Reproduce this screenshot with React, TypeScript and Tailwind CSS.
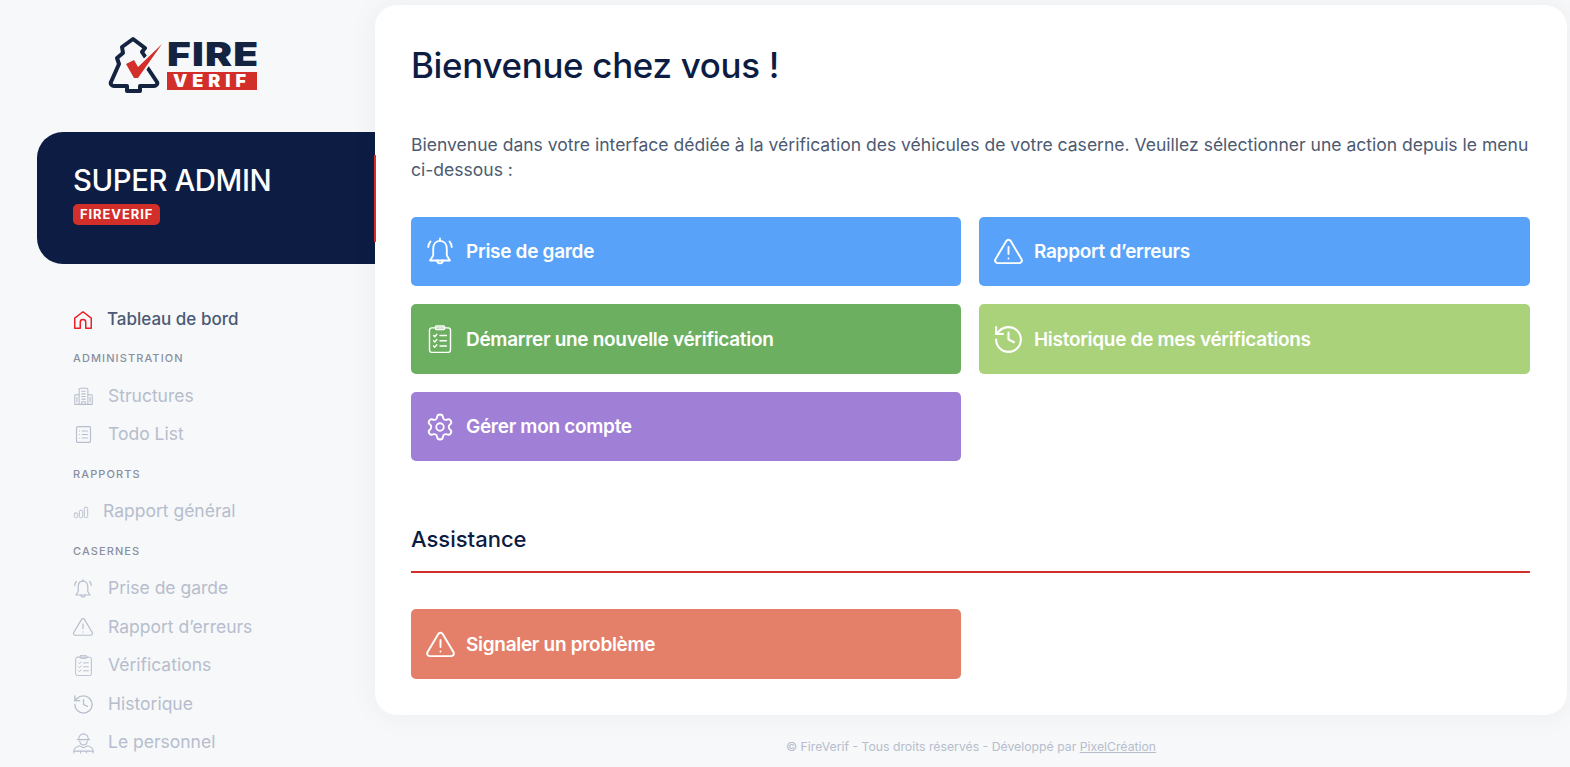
import { Settings, History } from 'lucide-react'

const font = { fontFamily: 'Inter, sans-serif' }

type IconProps = { className?: string; strokeWidth?: number }

function Svg({ className, strokeWidth = 1.5, children }: IconProps & { children: React.ReactNode }) {
    return (
        <svg viewBox="0 0 24 24" fill="none" stroke="currentColor" strokeWidth={strokeWidth} strokeLinecap="round" strokeLinejoin="round" className={`shrink-0 ${className ?? ''}`}>
            {children}
        </svg>
    )
}

function BellIcon(props: IconProps) {
    return (
        <Svg {...props}>
            <path d="M12 4.200C8.800 4.200 7.200 6.800 7.200 10v4.500L5 18h14l-2.200-3.500V10c0-3.200-1.600-5.800-4.800-5.800Z" />
            <path d="M12 4.200V2.500M10 18a2 2 0 0 0 4 0" />
            <path d="M5.300 4.500C4.400 5.600 3.800 6.800 3.700 8.500M18.700 4.500c.9 1.100 1.500 2.300 1.600 4" />
        </Svg>
    )
}

function WarnIcon(props: IconProps) {
    return (
        <Svg {...props}>
            <path d="M10.300 3.900 1.900 18a2 2 0 0 0 1.700 3h16.800a2 2 0 0 0 1.700-3L13.700 3.900a2 2 0 0 0-3.400 0Z" />
            <path d="M12 8.500v5.500M12 17.400h.01" />
        </Svg>
    )
}

function ChecklistIcon(props: IconProps) {
    return (
        <Svg {...props}>
            <rect x="3" y="2.500" width="18" height="21" rx="2" />
            <rect x="8" y="0.800" width="8" height="3" rx="1" />
            <path d="M6.500 9l1 1 1.800-2M6.500 13.500l1 1 1.800-2M6.500 18l1 1 1.800-2" />
            <path d="M12 9h5.500M12 13.500h5.500M12 18h5.500" />
        </Svg>
    )
}

function HomeIcon(props: IconProps) {
    return (
        <Svg {...props}>
            <path d="M3 10 12 3l9 7v11h-6v-6.500a3 3 0 0 0-6 0V21H3Z" />
        </Svg>
    )
}

function BuildingIcon(props: IconProps) {
    return (
        <Svg {...props}>
            <path d="M7 21V4a1.500 1.500 0 0 1 1.500-1.500h7A1.500 1.500 0 0 1 17 4v17" />
            <path d="M2 21V11a1 1 0 0 1 1-1h4M22 21V11a1 1 0 0 0-1-1h-4M2 21h20" />
            <path d="M10 6h4M10 9h4M10 12h4M10 15h4M10 21v-3h4v3M4.500 13v5M19.500 13v5" />
        </Svg>
    )
}

function ListDocIcon(props: IconProps) {
    return (
        <Svg {...props}>
            <rect x="4" y="3" width="16" height="18" rx="1.500" />
            <path d="M7.500 8h.01M7.500 12h.01M7.500 16h.01M10.500 8h6M10.500 12h6M10.500 16h6" />
        </Svg>
    )
}

function BarsIcon(props: IconProps) {
    return (
        <Svg {...props}>
            <rect x="2" y="13.500" width="5" height="7" rx="1.500" />
            <rect x="9.500" y="9.500" width="5" height="11" rx="1.500" />
            <rect x="17" y="5" width="5" height="15.500" rx="1.500" />
        </Svg>
    )
}

function FiremanIcon(props: IconProps) {
    return (
        <Svg {...props}>
            <path d="M7 8.500c0-3 2.200-5.500 5-5.500s5 2.500 5 5.500" />
            <path d="M5.500 9h13" />
            <path d="M8 10.500c.4 2.500 2 4 4 4s3.600-1.500 4-4" />
            <path d="M2 23v-2.500c0-2.500 2.500-4 6-5l4 2 4-2c3.500 1 6 2.500 6 5V23" />
            <path d="M2 21h20M9 21v2M15 21v2" />
        </Svg>
    )
}

function Logo() {
    return (
        <div className="flex items-start">
            <svg viewBox="0 0 56 58" className="w-[56px] h-[58px] shrink-0" fill="none">
                <path d="M25 3 37 12 34 16 40 25 37 28 49 46C50 48 48 50 46 50H32V55H19V50H6C4 50 2 48 3 46L11 28 9 22 15 17 14 11Z" stroke="#14233f" strokeWidth="4" strokeLinejoin="round" />
                <path d="M18 28 26 24 30 31 54 8 30 42 26 42Z" fill="#f6f8fa" stroke="#f6f8fa" strokeWidth="4" />
                <path d="M18 28 26 24 30 31 54 8 30 42 26 42Z" fill="#d32f2a" />
            </svg>
            <div className="flex flex-col w-[90px] ml-[3px] mt-[4px]">
                <div className="text-[#14233f] text-[33px] leading-[28px] h-[28px] font-black tracking-[1px] scale-x-[1.23] origin-left">FIRE</div>
                <div className="bg-[#d32f2a] text-white text-[18px] leading-[18px] h-[18px] font-black tracking-[5px] text-center mt-[4px]">VERIF</div>
            </div>
        </div>
    )
}

const sections = [
    {
        title: 'ADMINISTRATION',
        titleGap: 'mb-[19px]',
        items: [
            { label: 'Structures', icon: <BuildingIcon className="w-[21px] h-[21px]" strokeWidth={1.2} /> },
            { label: 'Todo List', icon: <ListDocIcon className="w-[21px] h-[21px]" strokeWidth={1.3} /> },
        ],
    },
    {
        title: 'RAPPORTS',
        titleGap: 'mb-[18px]',
        items: [{ label: 'Rapport général', icon: <BarsIcon className="w-4 h-4" strokeWidth={1.4} />, small: true }],
    },
    {
        title: 'CASERNES',
        titleGap: 'mb-[18px]',
        items: [
            { label: 'Prise de garde', icon: <BellIcon className="w-[24px] h-[24px]" strokeWidth={1.2} /> },
            { label: 'Rapport d’erreurs', icon: <WarnIcon className="w-[22px] h-[22px]" strokeWidth={1.3} /> },
            { label: 'Vérifications', icon: <ChecklistIcon className="w-[21px] h-[21px]" strokeWidth={1.1} /> },
            { label: 'Historique', icon: <History className="w-[23px] h-[23px] shrink-0" strokeWidth={1.4} /> },
            { label: 'Le personnel', icon: <FiremanIcon className="w-[23px] h-[23px]" strokeWidth={1.1} /> },
        ],
    },
]

function Sidebar() {
    return (
        <aside className="w-[375px] shrink-0 flex flex-col pl-[37px]">
            <div className="h-[132px] pl-[71px] pt-[36px]">
                <Logo />
            </div>
            <div className="h-[132px] bg-[#0c1c43] rounded-l-[26px] pl-[36px] pt-[30px]">
                <div className="text-white text-[29.300px] leading-[38px] font-medium tracking-[-0.4px]">SUPER ADMIN</div>
                <span className="inline-block mt-[4px] bg-[#d32f2a] text-white text-[13px] leading-[21px] h-[21px] px-[7px] rounded-[5px] font-bold tracking-[0.9px]">FIREVERIF</span>
            </div>
            <nav className="pl-[36px] pt-[43px]">
                <div className="flex items-center h-[26px] gap-[14px] text-[#4b5a75] text-[17px] font-medium -mb-[2px]">
                    <div className="w-[20px] flex justify-center">
                        <HomeIcon className="w-[22px] h-[22px] text-[#ee1c25]" strokeWidth={1.6} />
                    </div>
                    Tableau de bord
                </div>
                {sections.map(section => (
                    <div key={section.title}>
                        <div className={`h-[12px] mt-[21px] flex items-center text-[#8a90a0] text-[11px] font-medium tracking-[1.1px] ${section.titleGap}`}>{section.title}</div>
                        <div className="flex flex-col gap-[12.500px]">
                            {section.items.map(item => (
                                <div key={item.label} className={`flex items-center h-[26px] text-[#b7bdcc] text-[17.500px] ${'small' in item ? 'gap-[14px]' : 'gap-[15px]'}`}>
                                    {'small' in item ? item.icon : <div className="w-[20px] flex justify-center">{item.icon}</div>}
                                    {item.label}
                                </div>
                            ))}
                        </div>
                    </div>
                ))}
            </nav>
        </aside>
    )
}

function ActionButton({ label, color, icon }: { label: string; color: string; icon: React.ReactNode }) {
    return (
        <div className={`h-full rounded-[5px] flex items-center pl-[15px] gap-[12px] text-white text-[19px] font-semibold tracking-[-0.3px] ${color}`}>
            <div className="w-[28px] flex justify-center">{icon}</div>
            <span className="pt-[2px]">{label}</span>
        </div>
    )
}

export default function App() {
    return (
        <div className="w-[1570px] h-[767px] overflow-hidden flex bg-[#f6f8fa]" style={font}>
            <Sidebar />
            <div className="flex-1 pr-[3px] pt-[5px] flex flex-col relative">
                <div className="absolute -left-[1px] top-[155px] w-[2px] h-[87px] bg-[#d32f2a]" />
                <main className="bg-white rounded-[22px] h-[710px] pl-[36px] pr-[37px] pt-[36px] shadow-[0_0_30px_rgba(0,0,0,0.05)]">
                    <h1 className="text-[#0c1c43] text-[34.900px] leading-[48px] font-medium tracking-[-0.3px]">Bienvenue chez vous !</h1>
                    <p className="mt-[43px] text-[#4d5a72] text-[17.550px] leading-[25px]">
                        Bienvenue dans votre interface dédiée à la vérification des véhicules de votre caserne. Veuillez sélectionner une action depuis le menu ci-dessous :
                    </p>
                    <div className="grid grid-cols-[550px_551px] grid-rows-[69px_70px_69px] gap-[18px] mt-[35px]">
                        <ActionButton label="Prise de garde" color="bg-[#58a3f9]" icon={<BellIcon className="w-[34px] h-[34px]" strokeWidth={1.3} />} />
                        <ActionButton label="Rapport d’erreurs" color="bg-[#58a3f9]" icon={<WarnIcon className="w-[31px] h-[31px]" />} />
                        <ActionButton label="Démarrer une nouvelle vérification" color="bg-[#6daf60]" icon={<ChecklistIcon className="w-[28px] h-[28px]" strokeWidth={1.2} />} />
                        <ActionButton label="Historique de mes vérifications" color="bg-[#a9d27a]" icon={<History className="w-[33px] h-[33px] shrink-0" strokeWidth={1.5} />} />
                        <ActionButton label="Gérer mon compte" color="bg-[#a07fd6]" icon={<Settings className="w-[30px] h-[30px] shrink-0" strokeWidth={1.5} />} />
                    </div>
                    <h2 className="mt-[63px] text-[#0c1c43] text-[22px] leading-[30px] font-medium">Assistance</h2>
                    <div className="h-[2px] bg-[#d32f2a] mt-[17px]" />
                    <div className="w-[550px] h-[70px] mt-[36px]">
                        <ActionButton label="Signaler un problème" color="bg-[#e48069]" icon={<WarnIcon className="w-[31px] h-[31px]" />} />
                    </div>
                </main>
                <footer className="text-center text-[#b7bdcc] text-[12.250px] mt-[23px]">
                    © FireVerif - Tous droits réservés - Développé par <span className="underline">PixelCréation</span>
                </footer>
            </div>
        </div>
    )
}
